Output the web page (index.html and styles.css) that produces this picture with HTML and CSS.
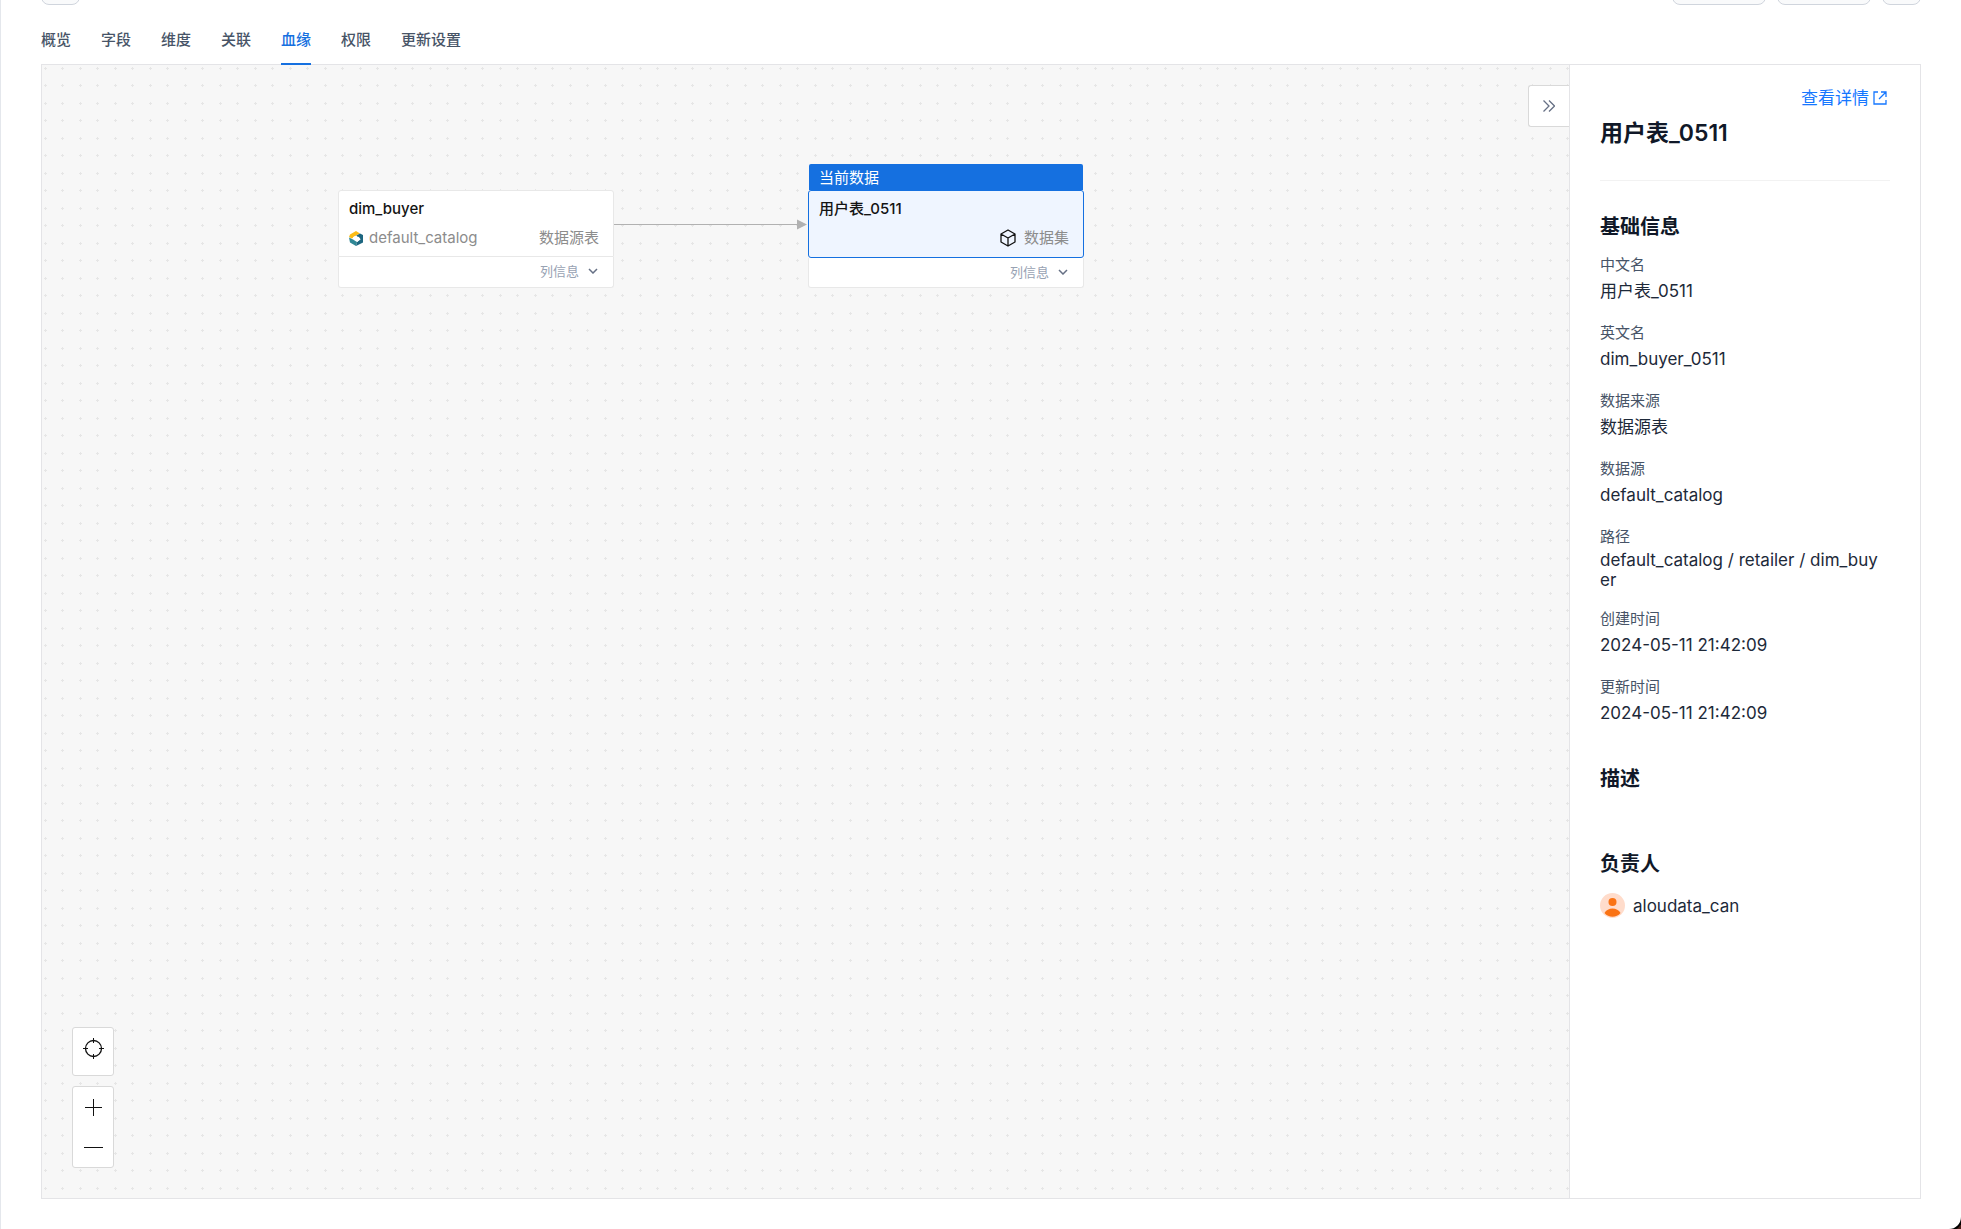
FILE: index.html
```html
<!DOCTYPE html>
<html lang="zh-CN">

<head>
    <meta charset="UTF-8">
    <meta name="viewport" content="width=device-width, initial-scale=1.0">
    <title>用户表_0511</title>
    <link rel="stylesheet" href="styles.css">
</head>

<body>

    <div class="page">
        <header class="toolbar">
            <button class="tool-button square" aria-label="返回"></button>
            <div class="toolbar-actions">
                <button class="tool-button" aria-label="编辑"></button>
                <button class="tool-button" aria-label="发布"></button>
                <button class="tool-button square" aria-label="更多"></button>
            </div>
        </header>

        <nav class="tabs">
            <button class="tab">概览</button>
            <button class="tab">字段</button>
            <button class="tab">维度</button>
            <button class="tab">关联</button>
            <button class="tab active">血缘</button>
            <button class="tab">权限</button>
            <button class="tab">更新设置</button>
        </nav>

        <main class="lineage">
            <section class="canvas">
                <!-- Dotted grid and the edge between the two nodes -->
                <svg class="canvas-layer" width="100%" height="100%">
                    <defs>
                        <pattern id="grid" width="35" height="35" patternUnits="userSpaceOnUse">
                            <path d="M2 3h3v1h-3z M3 2h1v3h-1z M19 3h3v1h-3z M20 2h1v3h-1z M2 20h3v1h-3z M3 19h1v3h-1z M19 20h3v1h-3z M20 19h1v3h-1z" fill="#e6e6e6" />
                        </pattern>
                    </defs>
                    <rect width="100%" height="100%" fill="url(#grid)" />
                    <path d="M572 159.500H757" stroke="#b1b1b1" />
                    <path d="M755 154.500l10 5-10 5z" fill="#b1b1b1" />
                </svg>

                <article class="node node-source">
                    <div class="node-body">
                        <h3 class="node-title">dim_buyer</h3>
                        <div class="node-meta">
                            <svg width="14" height="15" viewBox="0 0 14 15">
                                <path d="M1 3.500L7 0l4 2.500L6 5 3 7.500 0 6z" fill="#fbbc16" />
                                <path d="M0 6.500l4 2L8 11l-1 4-6-3.500z" fill="#2f8795" />
                                <path d="M11 2.500l3 1.500v7.500L7 15l1-4 3.500-2.500L10 6 6.500 5z" fill="#1d6680" />
                                <path d="M4 6l4-1.500V6l3.500 2L8 11V9L4 7.500z" fill="#fff" />
                            </svg>
                            <span>default_catalog</span>
                            <span class="node-type">数据源表</span>
                        </div>
                    </div>
                    <button class="node-footer">
                        列信息
                        <svg width="10" height="6" viewBox="0 0 10 6" fill="none" stroke="#667085" stroke-width="1.500"><path d="M1 1l4 4 4-4" /></svg>
                    </button>
                </article>

                <article class="node node-current">
                    <div class="node-flag">当前数据</div>
                    <div class="node-body">
                        <h3 class="node-title">用户表_0511</h3>
                        <div class="node-meta">
                            <span class="node-type">
                                <svg width="18" height="18" viewBox="0 0 18 18" fill="none" stroke="#111" stroke-width="1.300" stroke-linejoin="round"><path d="M9 1l7 4v8l-7 4-7-4V5z M2 5l7 4 7-4 M9 9v8" /></svg>
                                数据集
                            </span>
                        </div>
                    </div>
                    <button class="node-footer">
                        列信息
                        <svg width="10" height="6" viewBox="0 0 10 6" fill="none" stroke="#667085" stroke-width="1.500"><path d="M1 1l4 4 4-4" /></svg>
                    </button>
                </article>

                <button class="collapse" aria-label="收起">
                    <svg width="12" height="12" viewBox="0 0 12 12" fill="none" stroke="#667085" stroke-width="1.300"><path d="M0.500 0.500L6 6l-5.500 5.500 M6 0.500L11.500 6 6 11.500" /></svg>
                </button>

                <div class="controls">
                    <div class="control-group">
                        <button class="control" aria-label="定位">
                            <svg width="21" height="21" viewBox="0 0 21 21" fill="none" stroke="#111"><circle cx="10.500" cy="10.500" r="8" stroke-width="1.300" /><path d="M10.500 0v5 M10.500 16v5 M0 10.500h5 M16 10.500h5" /></svg>
                        </button>
                    </div>
                    <div class="control-group">
                        <button class="control" aria-label="放大">
                            <svg width="19" height="19" viewBox="0 0 19 19" stroke="#111"><path d="M9.500 1v17 M1 9.500h17" /></svg>
                        </button>
                        <button class="control" aria-label="缩小">
                            <svg width="19" height="19" viewBox="0 0 19 19" stroke="#111"><path d="M0 9.500h19" /></svg>
                        </button>
                    </div>
                </div>
            </section>

            <aside class="detail">
                <a href="#" class="detail-link">
                    查看详情
                    <svg width="14" height="14" viewBox="0 0 14 14" fill="none" stroke="#1677ff" stroke-width="1.300"><path d="M5 1H1v12h12V9 M8 1h5v5 M13 1L6 8" /></svg>
                </a>
                <h1 class="detail-title">用户表_0511</h1>

                <h2 class="section-title">基础信息</h2>
                <dl class="info">
                    <div class="info-item">
                        <dt>中文名</dt>
                        <dd>用户表_0511</dd>
                    </div>
                    <div class="info-item">
                        <dt>英文名</dt>
                        <dd>dim_buyer_0511</dd>
                    </div>
                    <div class="info-item">
                        <dt>数据来源</dt>
                        <dd>数据源表</dd>
                    </div>
                    <div class="info-item">
                        <dt>数据源</dt>
                        <dd>default_catalog</dd>
                    </div>
                    <div class="info-item">
                        <dt>路径</dt>
                        <dd>default_catalog / retailer / dim_buyer</dd>
                    </div>
                    <div class="info-item">
                        <dt>创建时间</dt>
                        <dd>2024-05-11 21:42:09</dd>
                    </div>
                    <div class="info-item">
                        <dt>更新时间</dt>
                        <dd>2024-05-11 21:42:09</dd>
                    </div>
                </dl>

                <h2 class="section-title description">描述</h2>

                <h2 class="section-title">负责人</h2>
                <div class="owner">
                    <svg width="25" height="25" viewBox="0 0 25 25">
                        <circle cx="12.500" cy="12.500" r="12.500" fill="#ffdccb" />
                        <circle cx="12.500" cy="9" r="4" fill="#fa7314" />
                        <path d="M4.500 20c3-6 13-6 16 0-4 5-12 5-16 0z" fill="#fa7314" />
                    </svg>
                    <span>aloudata_can</span>
                </div>
            </aside>
        </main>
    </div>

</body>

</html>
```

FILE: styles.css
```css
* {
    box-sizing: border-box;
}

html {
    background-color: #4a2018;
}

body {
    margin: 0;
    font-family: Inter, "Noto Sans CJK SC", sans-serif;
    font-size: 15px;
    line-height: 20px;
    color: #1d2939;
}

h1,
h2,
h3,
dl,
dd {
    margin: 0;
}

button {
    padding: 0;
    border: none;
    background: none;
    font: inherit;
    color: inherit;
    cursor: pointer;
}

svg {
    flex-shrink: 0;
}

.page {
    display: flex;
    flex-direction: column;
    min-height: 100vh;
    padding: 0 40px 30px;
    border-left: 1px solid #e4e7ec;
    border-bottom-right-radius: 12px;
    background-color: #fff;
    box-shadow: 0 0 0 2px #000;
}

/* Toolbar */
.toolbar {
    display: flex;
    justify-content: space-between;
    align-items: flex-end;
    height: 5px;
    overflow: hidden;
}

.toolbar-actions {
    display: flex;
    gap: 11px;
}

.tool-button {
    width: 94px;
    height: 40px;
    border: 1px solid #d0d5dd;
    border-radius: 8px;
    background-color: #f9fafb;
}

.tool-button.square {
    width: 39px;
}

/* Tabs */
.tabs {
    display: flex;
    gap: 30px;
    position: relative;
    z-index: 1;
    margin-bottom: -1px;
}

.tab {
    height: 60px;
    padding-top: 12px;
    border-bottom: 2px solid transparent;
    font-weight: 500;
    color: #475467;
}

.tab.active {
    border-bottom-color: #1570e0;
    color: #1570e0;
}

/* Lineage */
.lineage {
    display: flex;
    flex: 1;
    border: 1px solid #e4e4e7;
}

.canvas {
    position: relative;
    flex: 1;
    background-color: #f7f7f7;
}

.canvas-layer {
    position: absolute;
    inset: 0;
}

.node {
    position: absolute;
    width: 276px;
    color: #8c8c8c;
}

.node-source {
    left: 296px;
    top: 125px;
}

.node-current {
    left: 766px;
    top: 99px;
}

.node-flag {
    height: 26px;
    margin: 0 1px;
    padding: 4px 10px;
    border-radius: 2px 2px 0 0;
    background-color: #1570e0;
    color: #fff;
}

.node-body {
    height: 67px;
    padding: 8px 14px 8px 10px;
    border: 1px solid #e8e8e8;
    border-radius: 3px 3px 0 0;
    background-color: #fff;
}

.node-current .node-body {
    height: 68px;
    border-color: #1570e0;
    border-radius: 3px;
    background-color: #eff5ff;
}

.node-title {
    font-size: 15px;
    font-weight: 500;
    color: #141414;
}

.node-meta {
    display: flex;
    align-items: center;
    gap: 6px;
    margin-top: 9px;
}

.node-type {
    display: flex;
    align-items: center;
    gap: 7px;
    margin-left: auto;
}

.node-footer {
    display: flex;
    align-items: center;
    justify-content: flex-end;
    gap: 9px;
    width: 100%;
    height: 31px;
    padding: 0 15px 2px 0;
    border: 1px solid #e8e8e8;
    border-top: none;
    border-radius: 0 0 3px 3px;
    background-color: #fff;
    font-size: 13px;
    color: #98a2b3;
}

.node-current .node-footer {
    height: 30px;
}

.collapse {
    position: absolute;
    top: 20px;
    right: 0;
    display: flex;
    align-items: center;
    justify-content: center;
    width: 41px;
    height: 42px;
    border: 1px solid #d9d9d9;
    border-right: none;
    border-radius: 3px 0 0 3px;
    background-color: #fff;
}

.controls {
    position: absolute;
    left: 30px;
    bottom: 30px;
    display: flex;
    flex-direction: column;
    gap: 10px;
}

.control-group {
    width: 42px;
    min-height: 49px;
    padding-bottom: 1px;
    border: 1px solid #d9d9d9;
    border-radius: 3px;
    background-color: #fff;
}

.control {
    display: flex;
    align-items: center;
    justify-content: center;
    width: 100%;
    height: 41px;
}

.control + .control {
    height: 38px;
}

/* Detail panel */
.detail {
    width: 351px;
    padding: 20px 30px;
    border-left: 1px solid #e4e4e7;
    background-color: #fff;
    font-size: 17px;
}

.detail-link {
    display: flex;
    align-items: center;
    justify-content: flex-end;
    gap: 4px;
    height: 26px;
    padding-right: 3px;
    color: #1677ff;
    text-decoration: none;
}

.detail-title {
    padding: 7px 0 32px;
    border-bottom: 1px solid #f2f2f2;
    font-size: 23px;
    line-height: 30px;
    font-weight: 600;
    color: #101828;
}

.section-title {
    margin-top: 31px;
    font-size: 20px;
    line-height: 30px;
    font-weight: 600;
    color: #101828;
}

.info {
    display: flex;
    flex-direction: column;
    gap: 19px;
    margin-top: 13px;
    padding-right: 6px;
}

.info-item {
    display: flex;
    flex-direction: column;
    gap: 3px;
}

.info dt {
    font-size: 15px;
    color: #475467;
}

.info dd {
    display: flex;
    align-items: center;
    min-height: 26px;
    word-break: break-all;
}

.description {
    margin: 38px 0 55px;
}

.owner {
    display: flex;
    align-items: center;
    gap: 8px;
    margin-top: 14px;
}
```
